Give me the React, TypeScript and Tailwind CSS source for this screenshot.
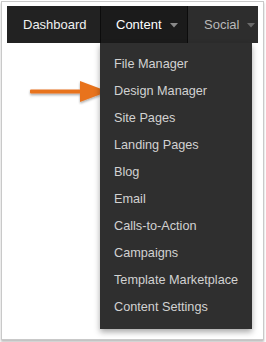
import React from 'react'

const items = [
    "File Manager",
    "Design Manager",
    "Site Pages",
    "Landing Pages",
    "Blog",
    "Email",
    "Calls-to-Action",
    "Campaigns",
    "Template Marketplace",
    "Content Settings",
]

const Caret = ({ color }: { color: string }) => (
    <svg width="8" height="5" viewBox="0 0 8 5" className="ml-[8px] mt-[1px]">
        <path d="M0 0 L8 0 L4 4.5 Z" fill={color} />
    </svg>
)

const App = () => {
    return (
        <div className="w-[266px] h-[342px] bg-white pl-px pt-px" style={{ fontFamily: '"Liberation Sans", Arial, sans-serif' }}>
            <div className="relative w-[263px] h-[339px] border border-[#c9c9c9] bg-white pl-[5px] pt-[4px] shadow-[0_2px_2px_rgba(0,0,0,0.25)]">
                <nav className="flex h-[37px] w-[251px] bg-[#222222] text-[13px]">
                    <div className="flex w-[93px] items-center pl-[16px] text-[#f0f0f0]">Dashboard</div>
                    <div className="relative flex w-[88px] items-center border-x border-[#0c0c0c] bg-[#1b1b1b] pl-[15px] text-white">
                        Content
                        <Caret color="#8a8a8a" />
                        <ul className="absolute left-[-1px] top-full z-10 w-[152px] bg-[#2f2f2f] py-[8px] shadow-[0_3px_6px_rgba(0,0,0,0.35)]">
                            {items.map((item) => (
                                <li key={item} className="flex h-[27px] items-center pl-[14px] text-[12.7px] text-[#d2d2d2]">
                                    {item}
                                </li>
                            ))}
                        </ul>
                    </div>
                    <div className="flex flex-1 items-center bg-[#2d2d2d] pl-[16px] text-[#b9b9b9]">
                        Social
                        <Caret color="#6a6a6a" />
                    </div>
                </nav>
                <svg className="absolute left-[26px] top-[77px]" width="84" height="26" viewBox="0 0 84 26">
                    <defs>
                        <filter id="sh" x="-10%" y="-30%" width="130%" height="170%">
                            <feDropShadow dx="0" dy="1.5" stdDeviation="1.2" floodColor="#000" floodOpacity="0.35" />
                        </filter>
                    </defs>
                    <g filter="url(#sh)">
                        <rect x="2" y="10.5" width="54" height="4" rx="1" fill="#e8731f" />
                        <path d="M52 2 L80 12.5 L52 23 Z" fill="#e8731f" />
                    </g>
                </svg>
            </div>
        </div>
    )
}

export default App
